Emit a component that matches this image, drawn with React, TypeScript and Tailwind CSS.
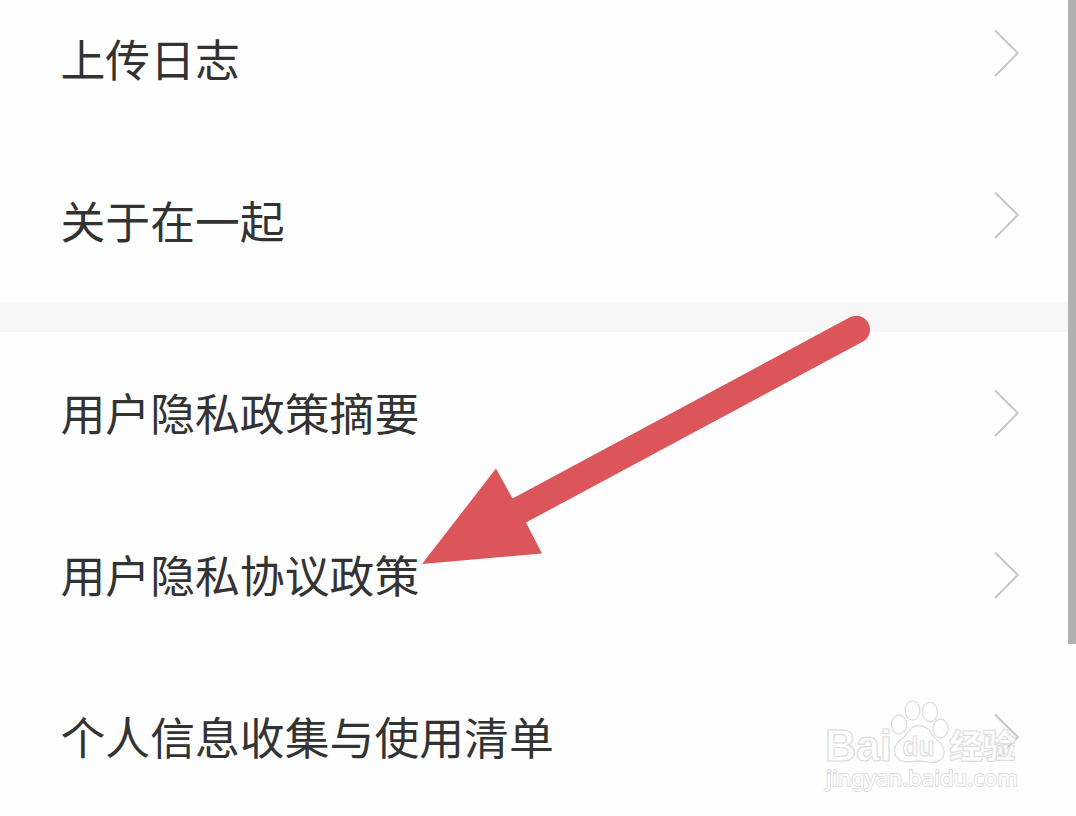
type RowProps = {
  label: string;
  shifted?: boolean;
};

const aboutRows = ['上传日志', '关于在一起'];
const privacyRows = ['用户隐私政策摘要', '用户隐私协议政策', '个人信息收集与使用清单'];

function Chevron() {
  return (
    <svg width="28" height="50" viewBox="0 0 28 50" fill="none" className="shrink-0">
      <path d="M3 2.500 25.800 25 3 48" stroke="#c8c8c8" strokeWidth="2.2" strokeLinejoin="round" />
    </svg>
  );
}

function SettingsRow({ label, shifted }: RowProps) {
  return (
    <div className="flex h-[162px] shrink-0 items-center justify-between pr-[56px] pl-[60.5px]">
      <span className={`text-[44.85px] leading-[64px] whitespace-nowrap text-[#333333] ${shifted ? 'pt-[10px]' : 'pb-[2px]'}`}>
        {label}
      </span>
      <Chevron />
    </div>
  );
}

function Arrow() {
  return (
    <svg width="460" height="260" viewBox="415 310 460 260" className="absolute top-[310px] left-[415px]">
      <path
        d="M422 564 496 468.500 512.500 498.500 849.500 317.500A13.700 13.700 0 0 1 863 341.500L526 522.500 542 553.500Z"
        fill="#db555b"
      />
    </svg>
  );
}

function Watermark() {
  return (
    <svg width="216" height="110" viewBox="815 690 216 110" className="absolute top-[690px] left-[815px]">
      <g fill="#ffffff" fillOpacity="0.65" stroke="#dedede" strokeWidth="1.3">
        <ellipse cx="899" cy="724.500" rx="7.5" ry="9.500" />
        <ellipse cx="912.500" cy="710.500" rx="7.3" ry="9.700" />
        <ellipse cx="930" cy="712" rx="7.500" ry="9.700" />
        <ellipse cx="940.500" cy="728.500" rx="7.500" ry="9.500" />
        <path d="M919 725.500C927 725.500 930 732 933 736C937 741 944 744 944 752C944 759 938 762.500 932 762.500C926 762.500 924 761 919 761C914 761 909 762.500 904 761.500C898 760.500 894.500 757 894.500 750C894.500 743 901 740 905 736C909 731 911 725.500 919 725.500Z" />
      </g>
      <g
        fill="#ffffff"
        stroke="#dcdcdc"
        strokeWidth="2"
        strokeLinejoin="round"
        fontFamily="'Liberation Sans', 'Noto Sans CJK SC', sans-serif"
      >
        <text x="825" y="760.500" fontSize="44" fontWeight="700" strokeWidth="1.2" textLength="67" lengthAdjust="spacingAndGlyphs">
          Bai
        </text>
        <text x="902.500" y="756" fontSize="27" fontWeight="700" strokeWidth="1.1" textLength="32" lengthAdjust="spacingAndGlyphs">
          du
        </text>
        <text x="949.500" y="758" fontSize="33" fontWeight="700" fillOpacity="0.75" paintOrder="stroke" textLength="66">
          经验
        </text>
        <text x="826" y="785.500" fontSize="22" strokeWidth="1.8" paintOrder="stroke" fontFamily="'Noto Sans', sans-serif" textLength="192" lengthAdjust="spacingAndGlyphs">
          jingyan.baidu.com
        </text>
      </g>
    </svg>
  );
}

export default function App() {
  return (
    <main className="relative flex h-[816px] w-[1076px] flex-col overflow-hidden bg-[#fefefe] font-['Noto_Sans_CJK_SC',sans-serif]">
      <section className="-mt-[28px] flex h-[330px] shrink-0 flex-col">
        {aboutRows.map((label) => (
          <SettingsRow key={label} label={label} shifted />
        ))}
      </section>
      <div className="h-[30px] shrink-0 bg-[#f7f7f7]" />
      <section className="flex flex-col">
        {privacyRows.map((label) => (
          <SettingsRow key={label} label={label} />
        ))}
      </section>

      <Arrow />
      <Watermark />
      <div className="absolute top-0 right-0 h-[644px] w-[8px] bg-[#b0b0b0]" />
    </main>
  );
}
